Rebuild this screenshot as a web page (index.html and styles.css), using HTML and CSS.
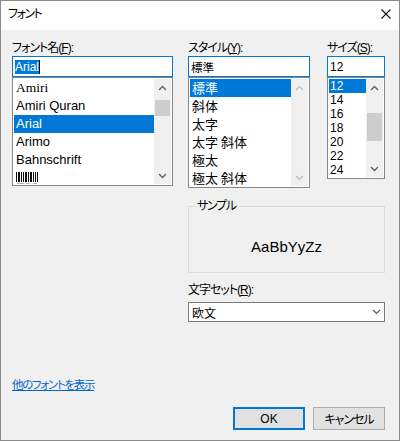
FILE: index.html
```html
<!DOCTYPE html>
<html lang="ja">
<head>
<meta charset="utf-8">
<title>フォント</title>
<link rel="stylesheet" href="styles.css">
</head>
<body>
<div class="window">
  <div class="titlebar">
    <span class="title">フォント</span>
    <svg class="close" width="10" height="10" viewBox="0 0 10 10"><path d="M0.5 0.5L9.5 9.5M9.5 0.5L0.5 9.5" stroke="#111" stroke-width="1.1" fill="none"/></svg>
  </div>
  <div class="content">
    <div class="top">
      <div class="col col-font">
        <div class="label">フォント名(<u>F</u>):</div>
        <div class="field"><span class="seltext">Arial</span><span class="caret"></span></div>
        <div class="list list-font">
          <div class="items">
            <div class="item f-serif">Amiri</div>
            <div class="item">Amiri Quran</div>
            <div class="item sel">Arial</div>
            <div class="item">Arimo</div>
            <div class="item">Bahnschrift</div>
            <div class="item barcode-row">
              <svg width="22" height="13" viewBox="0 0 22 13">
                <g fill="#111">
                  <rect x="0" y="0" width="1" height="10"/><rect x="2" y="0" width="2" height="10"/><rect x="5" y="0" width="1" height="10"/><rect x="7" y="0" width="1" height="10"/><rect x="9" y="0" width="2" height="10"/><rect x="12" y="0" width="1" height="10"/><rect x="14" y="0" width="2" height="10"/><rect x="17" y="0" width="1" height="10"/><rect x="19" y="0" width="1" height="10"/><rect x="21" y="0" width="1" height="10"/>
                </g>
                <g fill="#666"><rect x="1" y="11.5" width="7" height="1"/><rect x="10" y="11.5" width="4" height="1"/><rect x="17" y="11.5" width="4" height="1"/></g>
              </svg>
            </div>
          </div>
          <div class="scroll">
            <div class="sbtn"><svg width="9" height="6" viewBox="0 0 9 6"><polyline points="1,5 4.5,1.5 8,5" fill="none" stroke="#606060" stroke-width="1.4"/></svg></div>
            <div class="track"><div class="thumb thumb-font"></div></div>
            <div class="sbtn"><svg width="9" height="6" viewBox="0 0 9 6"><polyline points="1,1 4.5,4.5 8,1" fill="none" stroke="#606060" stroke-width="1.4"/></svg></div>
          </div>
        </div>
      </div>
      <div class="col col-style">
        <div class="label">スタイル(<u>Y</u>):</div>
        <div class="field cjk">標準</div>
        <div class="list list-style">
          <div class="items">
            <div class="item cjk sel">標準</div>
            <div class="item cjk">斜体</div>
            <div class="item cjk">太字</div>
            <div class="item cjk">太字 斜体</div>
            <div class="item cjk">極太</div>
            <div class="item cjk">極太 斜体</div>
          </div>
          <div class="scroll">
            <div class="sbtn"><svg width="9" height="6" viewBox="0 0 9 6"><polyline points="1,5 4.5,1.5 8,5" fill="none" stroke="#c2c2c2" stroke-width="1.4"/></svg></div>
            <div class="track"></div>
            <div class="sbtn"><svg width="9" height="6" viewBox="0 0 9 6"><polyline points="1,1 4.5,4.5 8,1" fill="none" stroke="#c2c2c2" stroke-width="1.4"/></svg></div>
          </div>
        </div>
      </div>
      <div class="col col-size">
        <div class="label">サイズ(<u>S</u>):</div>
        <div class="field">12</div>
        <div class="list list-size">
          <div class="items">
            <div class="item sz sel">12</div>
            <div class="item sz">14</div>
            <div class="item sz">16</div>
            <div class="item sz">18</div>
            <div class="item sz">20</div>
            <div class="item sz">22</div>
            <div class="item sz">24</div>
          </div>
          <div class="scroll">
            <div class="sbtn"><svg width="9" height="6" viewBox="0 0 9 6"><polyline points="1,5 4.5,1.5 8,5" fill="none" stroke="#606060" stroke-width="1.4"/></svg></div>
            <div class="track"><div class="thumb thumb-size"></div></div>
            <div class="sbtn"><svg width="9" height="6" viewBox="0 0 9 6"><polyline points="1,1 4.5,4.5 8,1" fill="none" stroke="#606060" stroke-width="1.4"/></svg></div>
          </div>
        </div>
      </div>
    </div>
    <div class="lower">
      <div class="right">
        <div class="group">
          <span class="group-label">サンプル</span>
          <div class="sample">AaBbYyZz</div>
        </div>
        <div class="label charset-label">文字セット(<u>R</u>):</div>
        <div class="combo">
          <span class="cjk">欧文</span>
          <svg width="9" height="6" viewBox="0 0 9 6"><polyline points="1,1 4.5,4.5 8,1" fill="none" stroke="#555" stroke-width="1.1"/></svg>
        </div>
      </div>
    </div>
    <div class="footer">
      <div class="link-row"><a class="link" href="#">他のフォントを表示</a></div>
      <div class="buttons">
        <div class="btn default">OK</div>
        <div class="btn btn-cjk">キャンセル</div>
      </div>
    </div>
  </div>
</div>
</body>
</html>
```

FILE: styles.css
```css
html, body {
  margin: 0;
  padding: 0;
}
body {
  width: 400px;
  height: 441px;
  background: #f0f0f0;
  font-family: "Liberation Sans", "Noto Sans CJK JP", sans-serif;
  font-size: 12px;
  color: #000;
  font-feature-settings: "palt";
  overflow: hidden;
}
.window {
  box-sizing: border-box;
  width: 400px;
  height: 441px;
  border: 1px solid #8a8a8a;
  background: #f0f0f0;
  display: flex;
  flex-direction: column;
}
.titlebar {
  box-sizing: border-box;
  height: 29px;
  background: #fff;
  display: flex;
  align-items: center;
  justify-content: space-between;
  padding: 0 8px 3px 7px;
}
.title {
  line-height: 16px;
  letter-spacing: -1.5px;
}
.close {
  display: block;
}
.content {
  flex: 1;
  display: flex;
  flex-direction: column;
  padding: 10px 14px 10px 11px;
}
.top {
  display: flex;
  align-items: flex-start;
}
.col-font { width: 161px; }
.col-style { width: 122px; margin-left: 15px; }
.col-size { width: 58px; margin-left: 17px; }
.label {
  height: 16px;
  line-height: 16px;
  white-space: nowrap;
  letter-spacing: -1px;
}
.label u {
  text-decoration: underline;
}
.field {
  box-sizing: border-box;
  height: 21px;
  border: 1px solid #0078d7;
  background: #fff;
  padding: 0 2px;
  display: flex;
  align-items: center;
  white-space: nowrap;
}
.seltext {
  background: #0078d7;
  color: #fff;
  line-height: 14px;
}
.caret {
  width: 1px;
  height: 14px;
  background: #000;
}
.cjk {
  font-family: "Noto Sans CJK JP", sans-serif;
}
.field.cjk {
  font-size: 11.5px;
}
.list {
  box-sizing: border-box;
  border: 1px solid #828790;
  background: #fff;
  padding: 1px;
  display: flex;
  overflow: hidden;
}
.list-font { height: 109px; }
.list-style { height: 111px; }
.list-size { height: 102px; }
.items {
  flex: 1;
  min-width: 0;
  overflow: hidden;
}
.item {
  height: 18px;
  line-height: 18px;
  padding-left: 2px;
  white-space: nowrap;
  font-size: 13px;
}
.item.f-serif {
  font-family: "Liberation Serif", serif;
  font-size: 13.5px;
}
.item.cjk {
  font-size: 13px;
}
.item.sz {
  height: 14px;
  line-height: 14px;
  font-size: 12px;
  padding-left: 1px;
}
.item.sel {
  background: #0078d7;
  color: #fff;
}
.barcode-row {
  display: flex;
  align-items: center;
}
.scroll {
  width: 17px;
  flex: none;
  display: flex;
  flex-direction: column;
  background: #f0f0f0;
}
.sbtn {
  height: 17px;
  flex: none;
  display: flex;
  align-items: center;
  justify-content: center;
}
.track {
  flex: 1;
}
.thumb {
  margin: 0 1px;
  background: #cdcdcd;
}
.thumb-font {
  margin-top: 4px;
  height: 16px;
}
.thumb-size {
  margin-top: 17px;
  height: 28px;
}
.lower {
  display: flex;
  padding-left: 176px;
}
.right {
  width: 197px;
}
.group {
  box-sizing: border-box;
  margin-top: 18px;
  height: 67px;
  border: 1px solid #dcdcdc;
  position: relative;
}
.group-label {
  position: absolute;
  top: -9px;
  left: 7px;
  padding: 0 1px;
  background: #f0f0f0;
  line-height: 16px;
  letter-spacing: -1.3px;
}
.sample {
  padding-top: 31px;
  text-align: center;
  font-family: "Liberation Sans", sans-serif;
  font-size: 15px;
  line-height: 18px;
}
.charset-label {
  margin-top: 9px;
}
.combo {
  box-sizing: border-box;
  margin-top: 4px;
  height: 20px;
  border: 1px solid #7a7a7a;
  background: #fff;
  display: flex;
  align-items: center;
  justify-content: space-between;
  padding: 0 3px 0 3px;
}
.combo svg {
  display: block;
}
.footer {
  margin-top: auto;
}
.link-row {
  line-height: 16px;
}
.link {
  color: #0066cc;
  text-decoration: underline;
  font-size: 11.5px;
  letter-spacing: -1.3px;
}
.buttons {
  margin-top: 14px;
  display: flex;
  justify-content: flex-end;
  gap: 8px;
}
.btn {
  box-sizing: border-box;
  width: 72px;
  height: 23px;
  border: 1px solid #adadad;
  background: #e1e1e1;
  display: flex;
  align-items: center;
  justify-content: center;
}
.btn-cjk {
  letter-spacing: -1px;
}
.btn.default {
  border: 2px solid #0078d7;
}
```
